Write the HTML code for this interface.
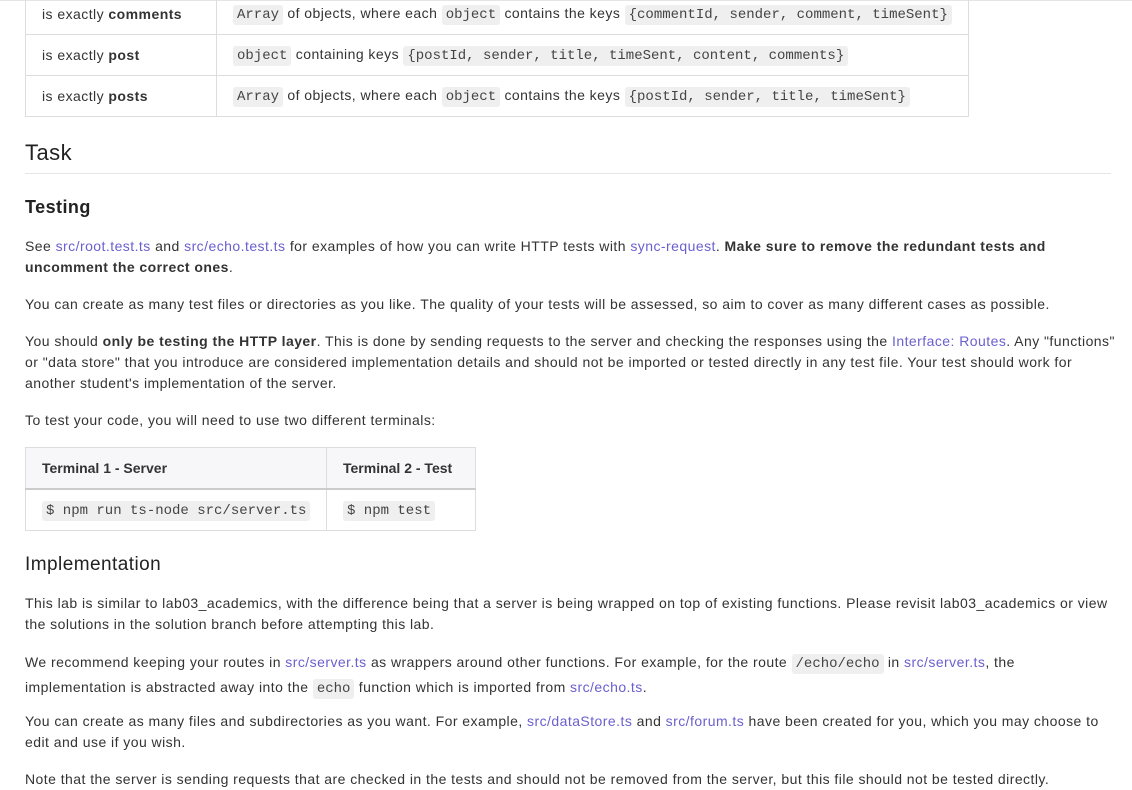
<!DOCTYPE html>
<html><head><meta charset="utf-8"><style>
body{margin:0;background:#fff;color:#333;font-family:"Liberation Sans",sans-serif;font-size:14px;letter-spacing:0.45px;width:1132px;height:775px;overflow:hidden;position:relative}
.topline{position:absolute;left:0;right:0;top:0;height:1px;background:#e5e5e5}
a{color:#6a5fcf;text-decoration:none}
code{font-family:"Liberation Mono",monospace;font-size:14px;letter-spacing:0;background:#efefef;border-radius:3px;padding:2px 4px;color:#444;white-space:nowrap}
table{border-collapse:collapse;position:absolute}
td,th{border:1px solid #ddd;padding:0 16px;text-align:left;white-space:nowrap}
.t1{left:25px;top:-7px;width:944px}
.t1 td{height:40px}
.t1 td:first-child{width:158px}
.t2{left:25px;top:447px;width:451px;table-layout:fixed}
.t2 th{height:40px;background:#f7f7f9;border-bottom:2px solid #ccc;font-size:14px;letter-spacing:0}
.t2 td{height:40px}
.t2 th:first-child{width:268px}
h2,h3,p{position:absolute;left:25px;margin:0;right:15px}
h2{font-size:22px;font-weight:normal;color:#222;top:140px;width:1086px;border-bottom:1px solid #e5e5e5;padding-bottom:7px;right:auto}
h3{font-size:18px;font-weight:bold;color:#222}
p{line-height:21px}
</style></head><body>
<div class="topline"></div>
<table class="t1">
<tr><td>is exactly <b>comments</b></td><td><code>Array</code> of objects, where each <code>object</code> contains the keys <code>{commentId, sender, comment, timeSent}</code></td></tr>
<tr><td>is exactly <b>post</b></td><td><code>object</code> containing keys <code>{postId, sender, title, timeSent, content, comments}</code></td></tr>
<tr><td>is exactly <b>posts</b></td><td><code>Array</code> of objects, where each <code>object</code> contains the keys <code>{postId, sender, title, timeSent}</code></td></tr>
</table>
<h2>Task</h2>
<h3 style="top:197px">Testing</h3>
<p style="top:236px">See <a>src/root.test.ts</a> and <a>src/echo.test.ts</a> for examples of how you can write HTTP tests with <a>sync-request</a>. <b>Make sure to remove the redundant tests and<br>uncomment the correct ones</b>.</p>
<p style="top:294px">You can create as many test files or directories as you like. The quality of your tests will be assessed, so aim to cover as many different cases as possible.</p>
<p style="top:331px">You should <b>only be testing the HTTP layer</b>. This is done by sending requests to the server and checking the responses using the <a>Interface: Routes</a>. Any "functions"<br>or "data store" that you introduce are considered implementation details and should not be imported or tested directly in any test file. Your test should work for<br>another student's implementation of the server.</p>
<p style="top:410px">To test your code, you will need to use two different terminals:</p>
<table class="t2">
<tr><th>Terminal 1 - Server</th><th>Terminal 2 - Test</th></tr>
<tr><td><code>$ npm run ts-node src/server.ts</code></td><td><code>$ npm test</code></td></tr>
</table>
<h3 style="top:554px;font-weight:normal;font-size:19px;color:#222">Implementation</h3>
<p style="top:593px">This lab is similar to lab03_academics, with the difference being that a server is being wrapped on top of existing functions. Please revisit lab03_academics or view<br>the solutions in the solution branch before attempting this lab.</p>
<p style="top:651px;line-height:23px">We recommend keeping your routes in <a>src/server.ts</a> as wrappers around other functions. For example, for the route <code>/echo/echo</code> in <a>src/server.ts</a>, the<br>implementation is abstracted away into the <code>echo</code> function which is imported from <a>src/echo.ts</a>.</p>
<p style="top:711px">You can create as many files and subdirectories as you want. For example, <a>src/dataStore.ts</a> and <a>src/forum.ts</a> have been created for you, which you may choose to<br>edit and use if you wish.</p>
<p style="top:769px;white-space:nowrap">Note that the server is sending requests that are checked in the tests and should not be removed from the server, but this file should not be tested directly.</p>
</body></html>
